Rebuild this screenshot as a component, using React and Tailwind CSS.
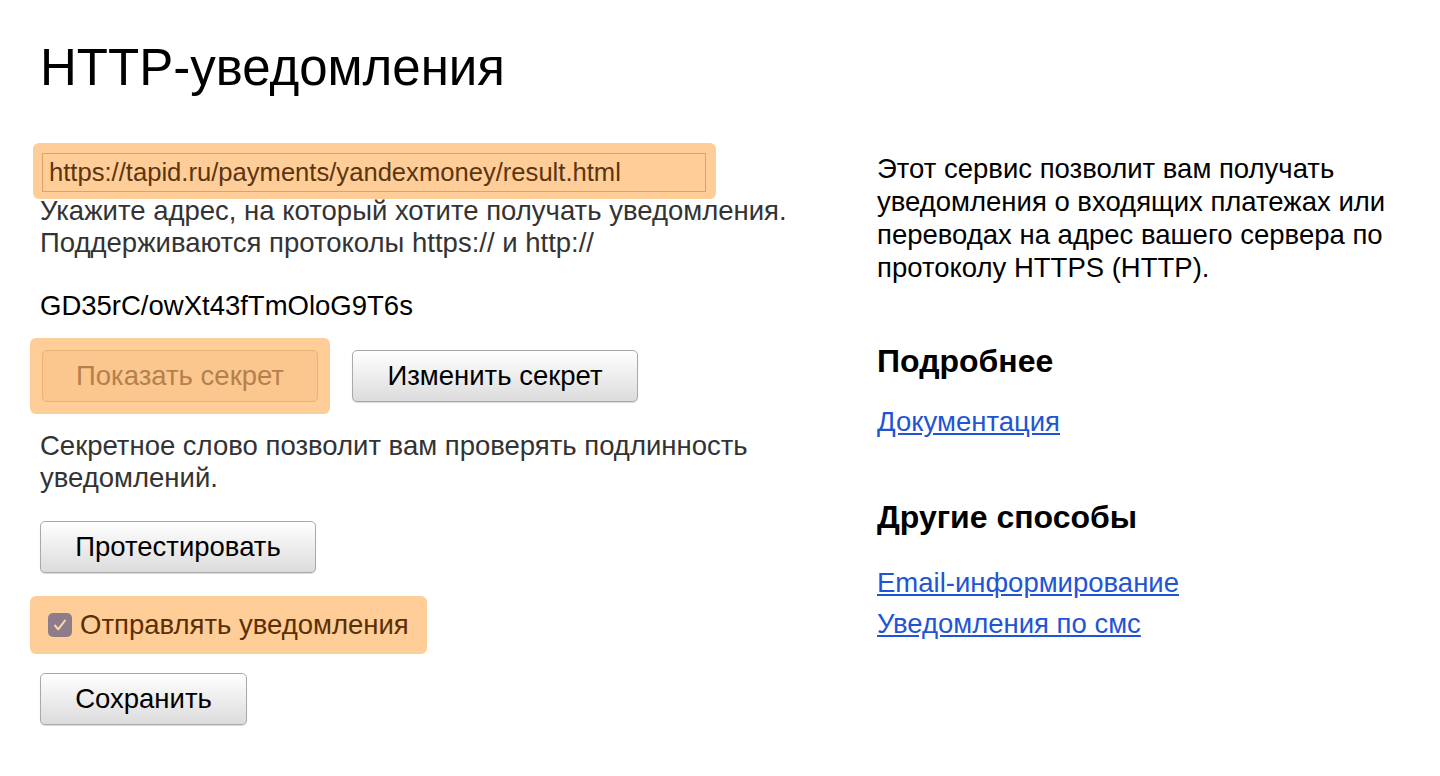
import React from "react";

const btn =
  "h-[52px] rounded-[5px] border border-[#a9a9a9] bg-gradient-to-b from-white to-[#dcdcdc] text-[27.5px] text-black shadow-[0_1px_1px_rgba(0,0,0,0.15)]";

function App() {
  return (
    <div className="min-h-screen w-full bg-white px-10 pt-[42px] font-['Liberation_Sans',Arial,sans-serif]">
      <h1 className="text-[51px] leading-none text-black">HTTP-уведомления</h1>

      <div className="mt-[50px] flex">
        {/* left column */}
        <div className="w-[837px]">
          <div className="-ml-[7px] w-[683px] rounded-[6px] bg-[#fecd98] pb-[7px] pl-[9px] pr-[10px] pt-[10px]">
            <div className="flex h-[39px] items-center border border-[#d9a46d] pl-[6px] text-[25.6px] text-[#5b3510]">
              https://tapid.ru/payments/yandexmoney/result.html
            </div>
          </div>
          <p className="-mt-[4px] text-[27.5px] leading-[32px] text-[#333]">
            Укажите адрес, на который хотите получать уведомления.
            <br />
            Поддерживаются протоколы https:// и http://
          </p>

          <p className="mt-[31px] text-[27.5px] leading-[32px] text-black">GD35rC/owXt43fTmOloG9T6s</p>

          <div className="-ml-[10px] mt-[16px] flex items-center gap-[22px]">
            <div className="rounded-[6px] bg-[#fecd98] p-[12px]">
              <div className="flex h-[52px] w-[276px] items-center justify-center rounded-[5px] border border-[#e6b27c] bg-[#fbc78f] text-[27.5px] text-[#b5804c]">
                Показать секрет
              </div>
            </div>
            <button className={btn + " w-[286px]"}>Изменить секрет</button>
          </div>

          <p className="mt-[16px] text-[27.5px] leading-[32px] text-[#333]">
            Секретное слово позволит вам проверять подлинность
            <br />
            уведомлений.
          </p>

          <button className={btn + " mt-[27px] w-[276px]"}>Протестировать</button>

          <div className="-ml-[10px] mt-[23px] flex h-[58px] w-[397px] items-center gap-[8px] rounded-[6px] bg-[#fecd98] pl-[18px]">
            <span className="flex h-[24px] w-[24px] items-center justify-center rounded-[5px] bg-[#8e7c8a]">
              <svg width="18" height="18" viewBox="0 0 18 18" fill="none">
                <path d="M4 9.5l3.2 3.8L14 4.5" stroke="#fcd7a8" strokeWidth="2" strokeLinecap="round" strokeLinejoin="round" />
              </svg>
            </span>
            <span className="text-[27.5px] text-[#5a2f05]">Отправлять уведомления</span>
          </div>

          <button className={btn + " mt-[19px] w-[207px]"}>Сохранить</button>
        </div>

        {/* right column */}
        <div className="w-[520px] pt-[9px]">
          <p className="text-[27.5px] leading-[33px] text-black">
            Этот сервис позволит вам получать
            <br />
            уведомления о входящих платежах или
            <br />
            переводах на адрес вашего сервера по
            <br />
            протоколу HTTPS (HTTP).
          </p>

          <h2 className="mt-[59px] text-[32px] font-bold leading-[36px] text-black">Подробнее</h2>
          <a href="#" className="mt-[26px] block text-[27.5px] leading-[33px] text-[#1f55d4] underline">
            Документация
          </a>

          <h2 className="mt-[61px] text-[32px] font-bold leading-[36px] text-black">Другие способы</h2>
          <a href="#" className="mt-[31px] block text-[27.5px] leading-[33px] text-[#1f55d4] underline">
            Email-информирование
          </a>
          <a href="#" className="mt-[8px] block text-[27.5px] leading-[33px] text-[#1f55d4] underline">
            Уведомления по смс
          </a>
        </div>
      </div>
    </div>
  );
}

export default App;
